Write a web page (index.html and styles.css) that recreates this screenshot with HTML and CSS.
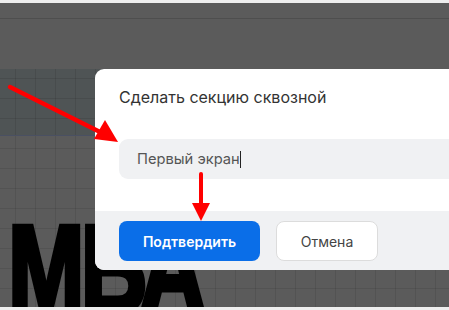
FILE: index.html
```html
<!DOCTYPE html>
<html lang="ru">
<head>
<meta charset="utf-8">
<title>Сделать секцию сквозной</title>
<link rel="stylesheet" href="styles.css">
</head>
<body>
<div class="page">
  <div class="topstrip"></div>
  <div class="canvas">
    <div class="topbar"></div>
    <div class="gap"></div>
    <div class="section-block grid"></div>
    <div class="lower grid">
      <div class="bigtext">МБА</div>
    </div>
  </div>
  <div class="bottomstrip"></div>

  <div class="dialog">
    <div class="dialog-body">
      <div class="dialog-title">Сделать секцию сквозной</div>
      <div class="input"><span class="input-text">Первый экран</span><span class="caret"></span></div>
    </div>
    <div class="dialog-footer">
      <button class="btn btn-primary">Подтвердить</button>
      <button class="btn btn-secondary">Отмена</button>
    </div>
  </div>

  <svg class="arrows" width="449" height="310" viewBox="0 0 449 310">
    <line x1="10" y1="87" x2="100" y2="132" stroke="#ff0000" stroke-width="4.5" stroke-linecap="round"/>
    <polygon points="118,142 94,139 105,120" fill="#ff0000"/>
    <line x1="201" y1="174" x2="201" y2="206" stroke="#ff0000" stroke-width="4" stroke-linecap="round"/>
    <polygon points="192,203 210,203 201,221" fill="#ff0000"/>
  </svg>
</div>
</body>
</html>
```
FILE: styles.css
```css
html, body {
  margin: 0;
  padding: 0;
  width: 449px;
  height: 310px;
  overflow: hidden;
  background: #efefef;
}
.page {
  position: relative;
  width: 449px;
  height: 310px;
  display: flex;
  flex-direction: column;
  overflow: hidden;
  font-family: Inter, Roboto, "Noto Sans", sans-serif;
}
.topstrip {
  height: 3px;
  background: #eeeeee;
  flex: none;
}
.bottomstrip {
  height: 3px;
  background: #eeeeee;
  flex: none;
}
.canvas {
  flex: 1;
  display: flex;
  flex-direction: column;
  background: #5b5b5b;
  overflow: hidden;
}
.topbar {
  height: 15px;
  border-bottom: 1px solid #4e4e4e;
  flex: none;
}
.gap {
  height: 50px;
  flex: none;
}
.grid {
  background-image:
    linear-gradient(to right, rgba(0,0,0,0.09) 1px, transparent 1px),
    linear-gradient(to bottom, rgba(0,0,0,0.09) 1px, transparent 1px);
  background-size: 20px 20px;
  background-position: 15px 9px;
}
.section-block {
  height: 66px;
  background-color: #4f5455;
  border-bottom: 1px solid #4a5062;
  flex: none;
}
.lower {
  flex: 1;
  position: relative;
  overflow: hidden;
  background-position: 15px 12px;
}
.bigtext {
  font-family: "Liberation Sans Narrow", "Liberation Sans", sans-serif;
  font-weight: 700;
  font-size: 124px;
  line-height: 1;
  color: #000;
  -webkit-text-stroke: 5px #000;
  margin-top: 71px;
  margin-left: 8px;
  letter-spacing: -5px;
  transform: scaleX(0.74);
  transform-origin: left top;
}
.dialog {
  position: absolute;
  left: 95px;
  top: 69px;
  width: 400px;
  background: #fff;
  border-radius: 9px;
  overflow: hidden;
  display: flex;
  flex-direction: column;
}
.dialog-body {
  padding: 19px 24px 32px 24px;
  display: flex;
  flex-direction: column;
  gap: 33px;
}
.dialog-title {
  font-size: 16px;
  line-height: 18px;
  color: #333;
}
.input {
  height: 40px;
  background: #f0f1f3;
  border-radius: 9px;
  display: flex;
  align-items: center;
  padding-left: 18px;
}
.input-text {
  font-size: 14.7px;
  color: #555;
}
.caret {
  width: 1px;
  height: 17px;
  background: #222;
  margin-left: 0px;
}
.dialog-footer {
  background: #f0f1f3;
  padding: 10px 24px 9px 24px;
  display: flex;
  gap: 16px;
}
.btn {
  height: 40px;
  border-radius: 8px;
  font-family: Inter, Roboto, sans-serif;
  font-size: 14px;
  cursor: pointer;
}
.btn-primary {
  width: 141px;
  background: #0a6ee8;
  border: none;
  color: #fff;
  font-weight: 600;
}
.btn-secondary {
  width: 102px;
  background: #fff;
  border: 1px solid #dcdcdc;
  color: #444;
}
.arrows {
  position: absolute;
  left: 0;
  top: 0;
}
```
